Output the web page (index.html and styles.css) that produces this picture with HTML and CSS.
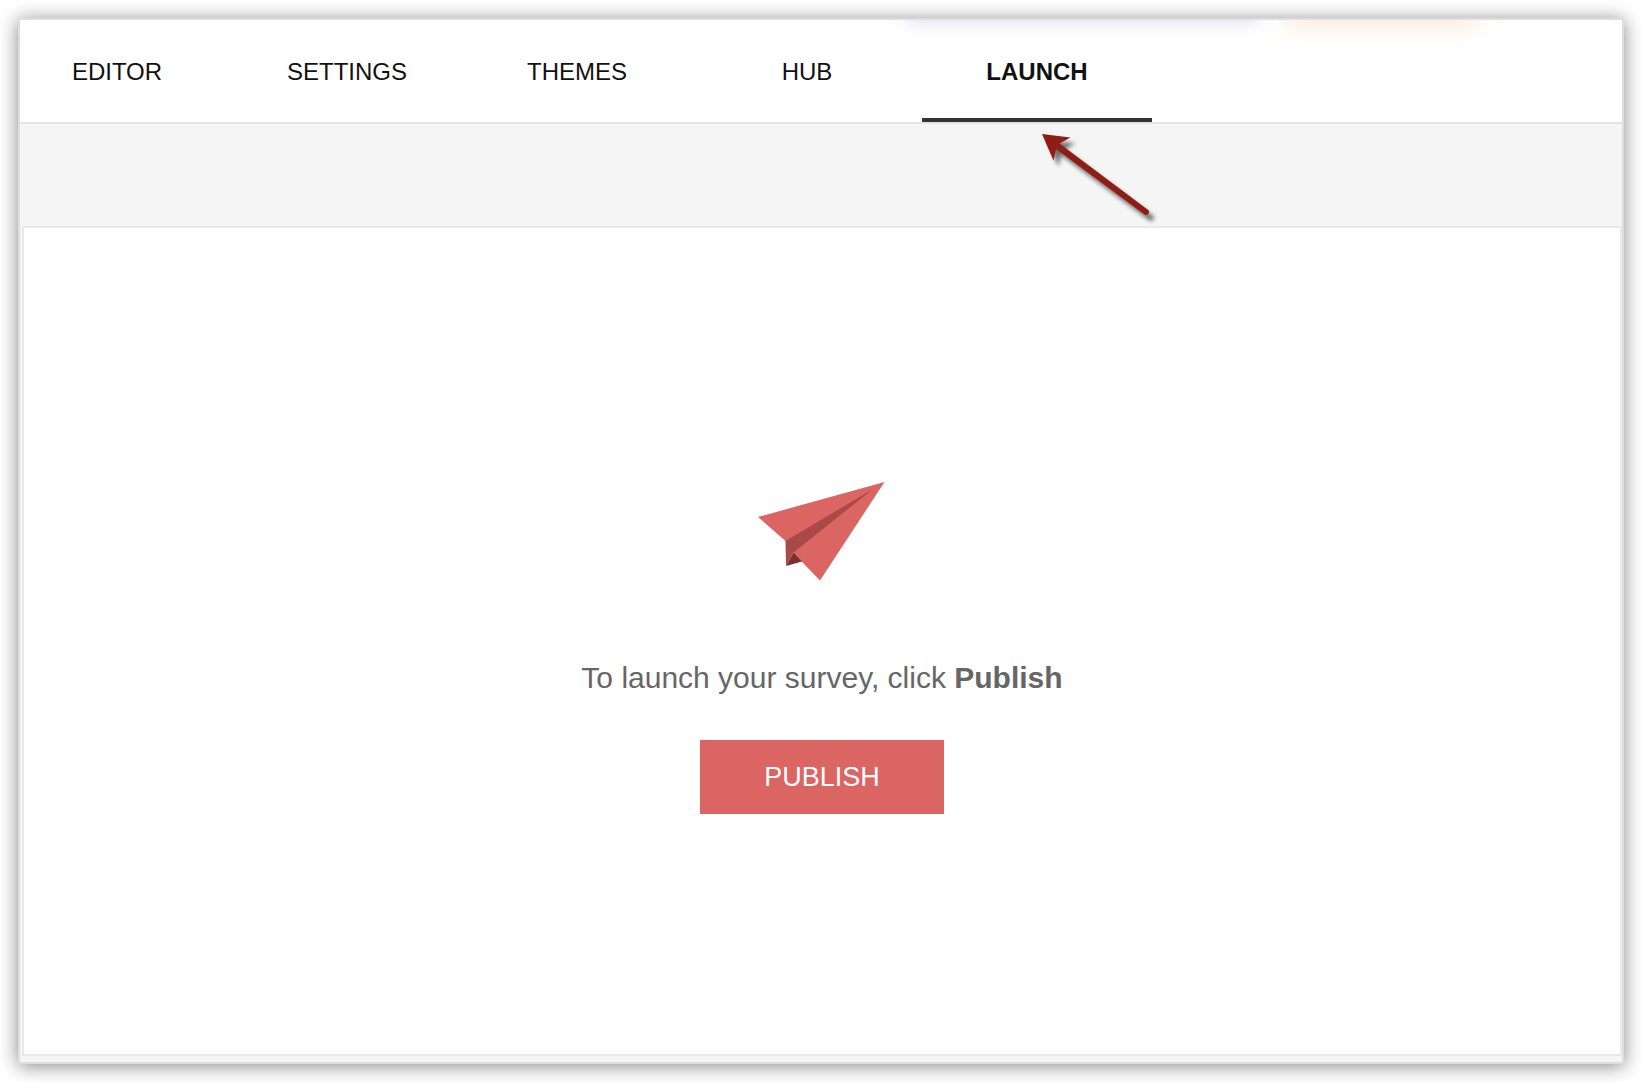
FILE: index.html
```html
<!DOCTYPE html>
<html lang="en">
<head>
<meta charset="utf-8">
<meta name="viewport" content="width=device-width, initial-scale=1">
<title>Launch survey</title>
<link rel="stylesheet" href="styles.css">
</head>
<body>
<div class="window">
  <header class="topbar">
    <div class="glows" aria-hidden="true">
      <span class="glow glow-violet"></span>
      <span class="glow glow-orange"></span>
    </div>
    <nav class="tabs">
      <a class="tab" href="#editor">EDITOR</a>
      <a class="tab" href="#settings">SETTINGS</a>
      <a class="tab" href="#themes">THEMES</a>
      <a class="tab" href="#hub">HUB</a>
      <a class="tab tab-active" href="#launch" aria-current="page">LAUNCH
        <svg class="pointer" width="140" height="110" viewBox="0 0 140 110" aria-hidden="true">
          <g class="pointer-shape">
            <path d="M22 14L50.500 17.500L39.500 23.500L127.500 89.500A2.700 2.700 0 0 1 124.500 94.500L36 29L33.500 40.500Z"/>
          </g>
        </svg>
      </a>
    </nav>
  </header>
  <main class="workspace">
    <section class="panel">
      <svg class="plane" width="128" height="100" viewBox="0 0 128 100" aria-hidden="true">
        <path fill="#da6562" d="M0 35L126.500 0L62 98.500L35.500 71L27.500 59Z"/>
        <path fill="#7d2f2f" d="M28 84L44 79.500L35.500 70.500Z"/>
        <path fill="#a94a48" d="M27.500 59L115 7L35.500 70.500L28 84Z"/>
      </svg>
      <p class="message">To launch your survey, click <strong>Publish</strong></p>
      <button class="publish" type="button">PUBLISH</button>
    </section>
  </main>
</div>
</body>
</html>
```
FILE: styles.css
```css
* {
  box-sizing: border-box;
}

body {
  display: flex;
  min-height: 100vh;
  margin: 0;
  padding: 18px;
  background: #fff;
  color: #111;
  font-family: "Liberation Sans", Arial, Helvetica, sans-serif;
}

.window {
  flex: 1;
  display: flex;
  flex-direction: column;
  border: 2px solid #dedede;
  background: #f5f5f5;
  box-shadow: 0 2px 18px rgba(0, 0, 0, 0.48);
}

.topbar {
  position: relative;
  border-bottom: 2px solid #e3e3e3;
  background: #fff;
}

.glows {
  position: absolute;
  inset: 0;
  overflow: hidden;
}

.glow {
  position: absolute;
  top: -20px;
  height: 20px;
}

.glow-violet {
  left: 886px;
  width: 352px;
  box-shadow: 0 0 20px #d9d3ec;
}

.glow-orange {
  left: 1264px;
  width: 194px;
  box-shadow: 0 4px 26px #fae3cf;
}

.tabs {
  display: flex;
}

.tab {
  position: relative;
  width: 230px;
  height: 102px;
  border-bottom: 4px solid transparent;
  color: #111;
  font-size: 24px;
  line-height: 104px;
  text-align: center;
  text-decoration: none;
}

.tab:first-child {
  width: 212px;
  padding-right: 18px;
}

.tab-active {
  border-bottom-color: #333;
  font-weight: 700;
}

.pointer {
  position: absolute;
  top: 100px;
  left: 98px;
}

.pointer-shape {
  fill: #8f1d14;
  filter: drop-shadow(5px 6px 2px rgba(0, 0, 0, 0.55));
}

.workspace {
  flex: 1;
  display: flex;
  padding: 102px 0 6px 2px;
}

.panel {
  flex: 1;
  display: flex;
  flex-direction: column;
  align-items: center;
  padding: 254px 24px 24px;
  border: 2px solid #e9e9e9;
  background: #fff;
}

.message {
  margin: 78px 0 44px;
  color: #666;
  font-size: 30px;
  line-height: 36px;
}

.publish {
  width: 244px;
  height: 74px;
  padding: 0;
  border: 0;
  background: #da6562;
  color: #fff;
  font: 27px "Liberation Sans", Arial, Helvetica, sans-serif;
}
```
